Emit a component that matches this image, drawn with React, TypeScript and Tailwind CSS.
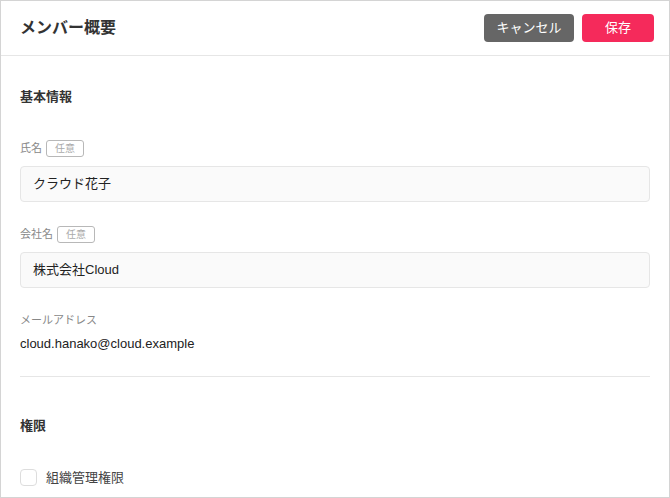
import React, { useState } from 'react';

const font = { fontFamily: '"Liberation Sans", "Noto Sans CJK JP", sans-serif' };

const OptionalBadge = () => (
  <span className="inline-flex h-[17px] w-[38px] items-center justify-center rounded-[3px] border border-[#b8b8b8] text-[10px] text-[#aaa]">
    任意
  </span>
);

const TextField: React.FC<{ label: string; value: string; className?: string }> = ({ label, value, className }) => (
  <div className={className}>
    <div className="flex h-[17px] items-center gap-[4px]">
      <span className="text-[11px] text-[#888]">{label}</span>
      <OptionalBadge />
    </div>
    <div className="mt-[9px] flex h-[36px] items-center rounded-[4px] border border-[#e6e6e6] bg-[#fafafa] px-[12px] text-[13px] text-[#222]">
      {value}
    </div>
  </div>
);

export default function App() {
  const [checked, setChecked] = useState(false);

  return (
    <div style={font} className="h-[498px] w-[670px] overflow-hidden border border-[#d4d4d4] bg-white">
      {/* Header */}
      <header className="flex h-[55px] items-center justify-between border-b border-[#e6e6e6] pl-[19px] pr-[15px]">
        <h1 className="text-[16px] font-bold text-[#333]">メンバー概要</h1>
        <div className="flex items-center gap-[8px]">
          <button className="h-[28px] w-[90px] rounded-[4px] bg-[#666] text-[13px] text-white">キャンセル</button>
          <button className="h-[28px] w-[72px] rounded-[4px] bg-[#f52a5b] text-[13px] text-white">保存</button>
        </div>
      </header>

      {/* Body */}
      <main className="px-[19px]">
        <h2 className="mt-[31px] h-[20px] text-[13px] font-bold leading-[20px] text-[#333]">基本情報</h2>

        <TextField label="氏名" value="クラウド花子" className="mt-[33px]" />
        <TextField label="会社名" value="株式会社Cloud" className="mt-[24px]" />

        <div className="mt-[24px] h-[16px] text-[11px] leading-[16px] text-[#888]">メールアドレス</div>
        <div className="mt-[6px] h-[20px] text-[13px] leading-[20px] text-[#222]">cloud.hanako@cloud.example</div>

        <div className="mt-[22px] h-px bg-[#e6e6e6]" />

        <h2 className="mt-[39px] h-[20px] text-[13px] font-bold leading-[20px] text-[#333]">権限</h2>

        <label className="mt-[33px] flex h-[17px] cursor-pointer items-center gap-[9px]">
          <input
            type="checkbox"
            checked={checked}
            onChange={() => setChecked(!checked)}
            className="h-[17px] w-[17px] appearance-none rounded-[4px] border border-[#ddd] bg-white"
          />
          <span className="text-[13px] text-[#444]">組織管理権限</span>
        </label>
      </main>
    </div>
  );
}
